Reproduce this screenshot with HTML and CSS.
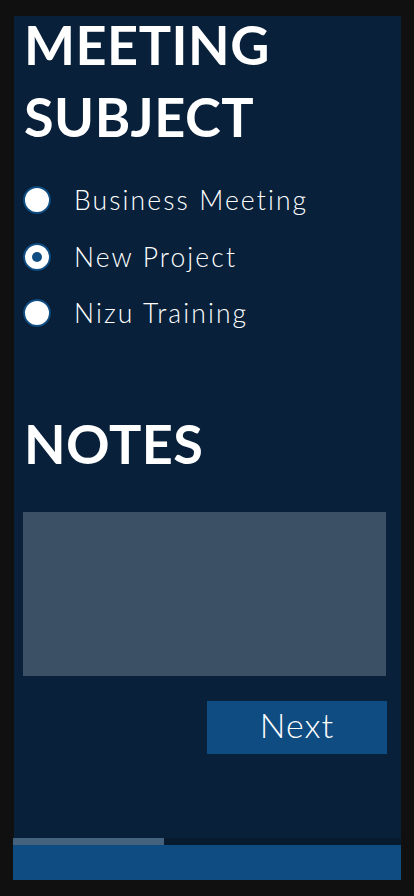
FILE: index.html
```html
<!DOCTYPE html>
<html>
<head>
<meta charset="utf-8">
<link rel="stylesheet" href="styles.css">
</head>
<body>
<div class="screen">
  <div class="panel">
    <h1 class="title">MEETING<br>SUBJECT</h1>
    <ul class="options">
      <li class="option"><span class="radio"></span><span class="label">Business Meeting</span></li>
      <li class="option"><span class="radio checked"></span><span class="label">New Project</span></li>
      <li class="option"><span class="radio"></span><span class="label">Nizu Training</span></li>
    </ul>
    <h2 class="title notes-title">NOTES</h2>
    <div class="notes"></div>
    <div class="actions"><button class="next">Next</button></div>
  </div>
  <div class="progress"><div class="progress-fill"></div></div>
  <div class="footer"></div>
</div>
</body>
</html>
```
FILE: styles.css
```css
html, body {
  margin: 0;
  padding: 0;
  background: #101010;
}
.screen {
  width: 388px;
  margin-left: 13px;
  padding-top: 16px;
  font-family: Lato, "Noto Sans", sans-serif;
}
.panel {
  margin-left: 1px;
  background: #08203a;
  height: 822px;
  padding: 0 14px 0 10px;
  box-sizing: border-box;
  display: flex;
  flex-direction: column;
}
.title {
  margin: -7px 0 0;
  color: #fff;
  font-weight: 700;
  font-size: 54px;
  line-height: 72px;
  letter-spacing: 0.5px;
}
.options {
  list-style: none;
  margin: 19px 0 0;
  padding: 0;
  display: flex;
  flex-direction: column;
}
.option {
  display: flex;
  align-items: center;
  height: 56.5px;
}
.radio {
  flex: none;
  width: 28px;
  height: 28px;
  margin-left: -1px;
  border-radius: 50%;
  background: #fff;
  box-sizing: border-box;
  border: 2px solid #0f4c81;
  box-shadow: 0 0 1px #04101c;
  margin-right: 23px;
  position: relative;
}
.radio.checked::after {
  content: "";
  position: absolute;
  left: 50%;
  top: 50%;
  width: 10px;
  height: 10px;
  margin: -5px 0 0 -5px;
  border-radius: 50%;
  background: #0f4c81;
}
.label {
  color: #fff;
  font-weight: 300;
  font-size: 26.5px;
  letter-spacing: 2.1px;
}
.notes-title {
  margin-top: 66px;
}
.notes {
  margin-top: 32px;
  margin-left: -1px;
  width: 363px;
  height: 164px;
  background: #3b5064;
}
.actions {
  display: flex;
  justify-content: flex-end;
  margin-top: 25px;
}
.next {
  width: 180px;
  height: 53px;
  background: #0f4c81;
  border: none;
  color: #fff;
  font-family: Lato, "Noto Sans", sans-serif;
  font-weight: 300;
  font-size: 34px;
  letter-spacing: 1px;
  padding: 0 0 5px;
}
.progress {
  height: 7px;
  background: #071a2e;
}
.progress-fill {
  width: 151px;
  height: 100%;
  background: #44627e;
}
.footer {
  height: 35px;
  background: #0f4c81;
}
```
